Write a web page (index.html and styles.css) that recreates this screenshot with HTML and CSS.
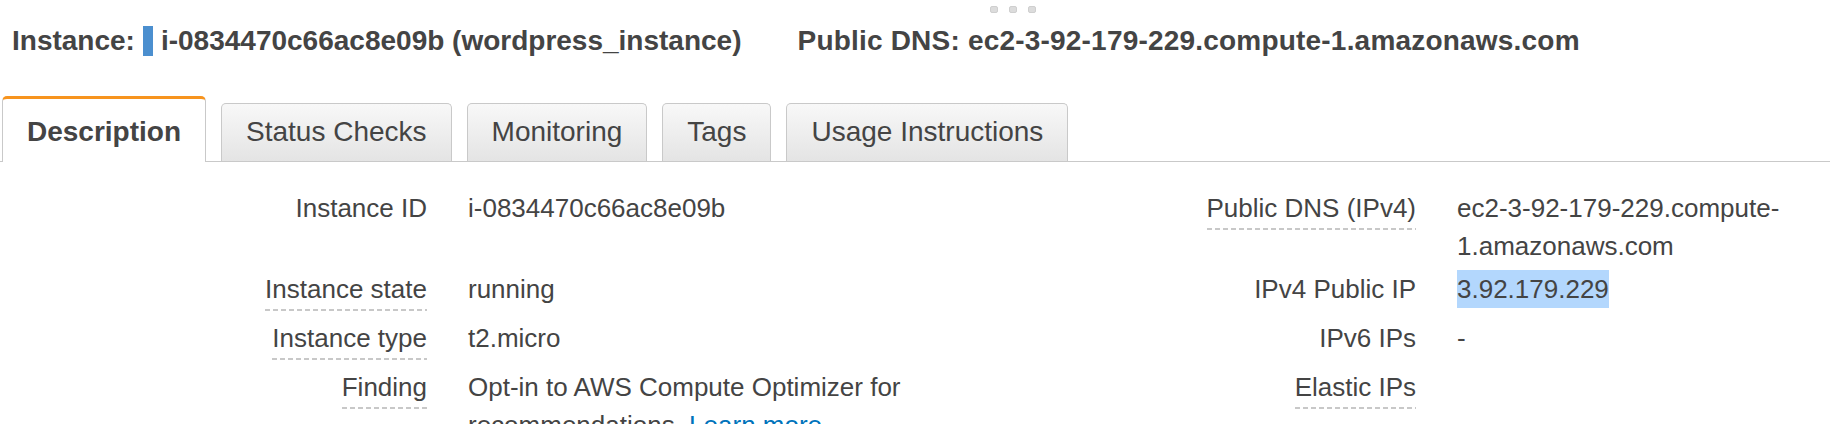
FILE: index.html
```html
<!DOCTYPE html>
<html lang="en">
<head>
<meta charset="utf-8">
<title>Instance details</title>
<link rel="stylesheet" href="styles.css">
</head>
<body>
<div class="page">
  <div class="grip"><span></span><span></span><span></span></div>
  <header class="head">
    <span class="head-label">Instance:</span>
    <span class="swatch"></span>
    <span class="head-id">i-0834470c66ac8e09b (wordpress_instance)</span>
    <span class="head-dns">Public DNS: ec2-3-92-179-229.compute-1.amazonaws.com</span>
  </header>
  <nav class="tabs">
    <div class="tab active">Description</div>
    <div class="tab">Status Checks</div>
    <div class="tab">Monitoring</div>
    <div class="tab">Tags</div>
    <div class="tab">Usage Instructions</div>
  </nav>
  <div class="details">
    <div class="lbl"><span>Instance ID</span></div>
    <div class="val">i-0834470c66ac8e09b</div>
    <div class="lbl"><span class="dash">Public DNS (IPv4)</span></div>
    <div class="val">ec2-3-92-179-229.compute-<wbr>1.amazonaws.com</div>

    <div class="lbl"><span class="dash">Instance state</span></div>
    <div class="val">running</div>
    <div class="lbl"><span>IPv4 Public IP</span></div>
    <div class="val"><span class="sel">3.92.179.229</span></div>

    <div class="lbl"><span class="dash">Instance type</span></div>
    <div class="val">t2.micro</div>
    <div class="lbl"><span>IPv6 IPs</span></div>
    <div class="val">-</div>

    <div class="lbl"><span class="dash">Finding</span></div>
    <div class="val">Opt-in to AWS Compute Optimizer for recommendations. <a class="link" href="#">Learn more</a></div>
    <div class="lbl"><span class="dash">Elastic IPs</span></div>
    <div class="val"></div>
  </div>
</div>
</body>
</html>
```

FILE: styles.css
```css
html, body {
  margin: 0;
  padding: 0;
  background: #fff;
}
body {
  font-family: "Liberation Sans", Arial, Helvetica, sans-serif;
  color: #444;
  height: 424px;
  overflow: hidden;
}
.page {
  position: relative;
}
.grip {
  position: absolute;
  left: 990px;
  top: 6px;
  display: flex;
  gap: 11px;
}
.grip span {
  width: 8px;
  height: 7px;
  border-radius: 2px;
  background: #dcdcdc;
  border: 1px solid #cfcfcf;
  box-sizing: border-box;
}
.head {
  display: flex;
  align-items: center;
  padding: 24px 0 0 12px;
  font-size: 28px;
  font-weight: bold;
  line-height: 34px;
  white-space: nowrap;
}
.swatch {
  width: 10px;
  height: 30px;
  background: #4b8fcf;
  margin: 0 8px;
}
.head-dns {
  margin-left: 56px;
  letter-spacing: 0.2px;
}
.tabs {
  display: flex;
  align-items: flex-end;
  gap: 15px;
  margin-top: 38px;
  padding-left: 2px;
  border-bottom: 1px solid #c9c9c9;
}
.tab {
  font-size: 28px;
  line-height: 34px;
  padding: 11px 24px 12px;
  border: 1px solid #c9c9c9;
  border-bottom: none;
  border-radius: 5px 5px 0 0;
  background: linear-gradient(to bottom, #f8f8f8, #e4e4e4);
  color: #444;
  white-space: nowrap;
}
.tab.active {
  font-weight: bold;
  background: #fff;
  border-top: 3px solid #f7941e;
  padding: 16px 24px 13px;
  margin-bottom: -1px;
}
.details {
  display: grid;
  grid-template-columns: 427px 600px 307px 340px;
  column-gap: 41px;
  padding-top: 25px;
  font-size: 26px;
  line-height: 38px;
}
.lbl {
  display: flex;
  justify-content: flex-end;
  align-items: flex-start;
  padding: 2px 0 3px;
  white-space: nowrap;
}
.lbl span {
  display: block;
  padding-bottom: 3px;
  margin-bottom: 3px;
}
.lbl span.dash {
  background: linear-gradient(to right, #c8c8c8 5px, transparent 5px) repeat-x left bottom / 8px 2px;
}
.val {
  padding: 2px 0 3px;
}
.sel {
  display: inline-block;
  background: #b3d7fd;
  line-height: 38px;
}
.link {
  color: #0073bb;
  text-decoration: none;
}
```
